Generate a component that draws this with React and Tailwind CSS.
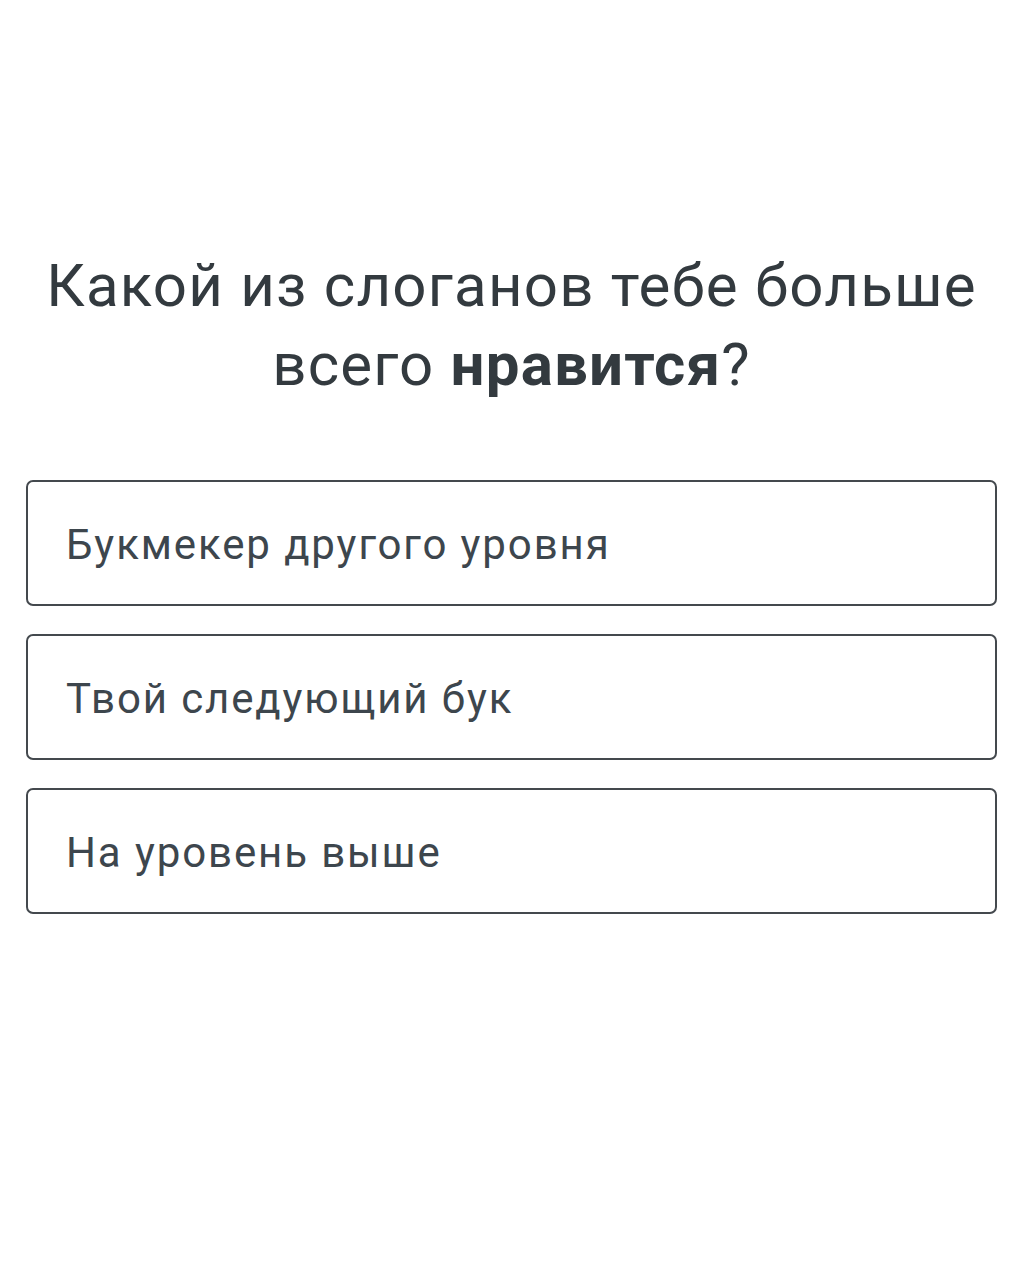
import React from 'react';

const options = ['Букмекер другого уровня', 'Твой следующий бук', 'На уровень выше'];

const Option = ({ children }) => (
  <button
    type="button"
    className="flex h-[126px] w-full items-center rounded-[7px] border-2 border-[#44494e] bg-white px-[38px] pt-[2px] text-left text-[42px] tracking-[0.045em] text-[#3d464d]"
  >
    {children}
  </button>
);

export default function App() {
  return (
    <div className="min-h-[1280px] w-full bg-white font-['Roboto',sans-serif]">
      <div className="px-[26px] pt-[246px]">
        <h1 className="text-center text-[60px] font-normal leading-[79px] tracking-[0.02em] text-[#333a3f]">
          Какой из слоганов тебе больше
          <br />
          всего <b className="font-bold">нравится</b>?
        </h1>
        <div className="mt-[76px] flex flex-col gap-[28px]">
          {options.map((o) => (
            <Option key={o}>{o}</Option>
          ))}
        </div>
      </div>
    </div>
  );
}
